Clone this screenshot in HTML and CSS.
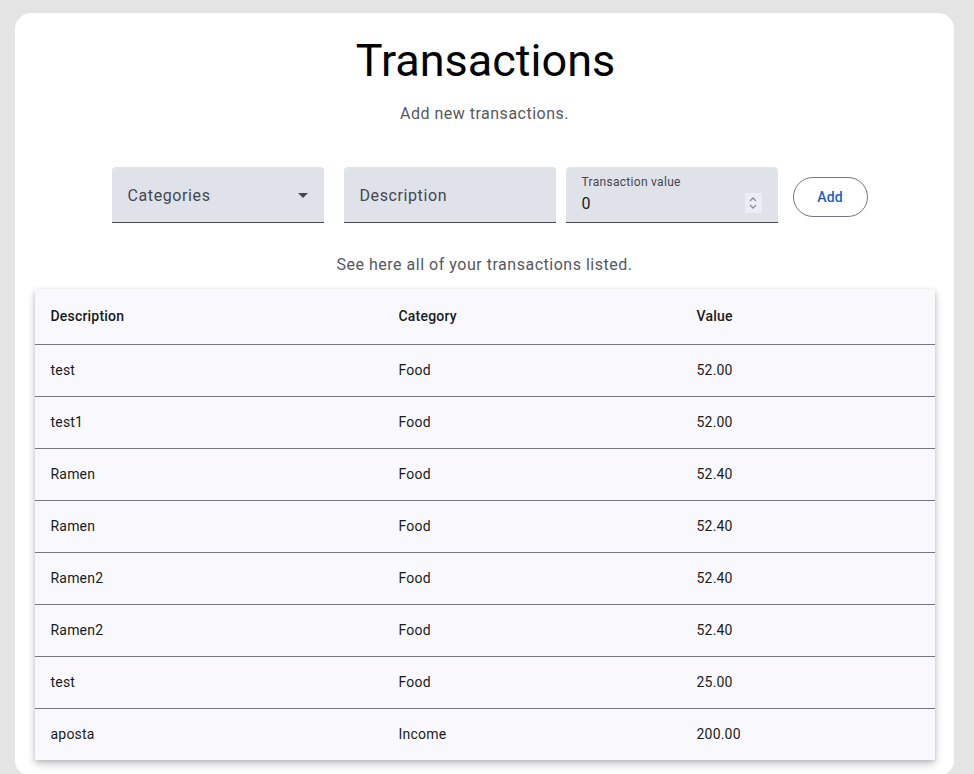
FILE: index.html
```html
<!DOCTYPE html>
<html lang="en">
<head>
<meta charset="utf-8">
<title>Transactions</title>
<link rel="stylesheet" href="styles.css">
</head>
<body>
<main class="card">
  <h1 class="title">Transactions</h1>
  <p class="subtitle">Add new transactions.</p>
  <form class="form-row">
    <div class="field field-select">
      <span class="field-text">Categories</span>
      <svg class="caret" width="10" height="5" viewBox="0 0 10 5"><path d="M0 0h10L5 5z" fill="#44474e"/></svg>
    </div>
    <div class="field field-desc">
      <span class="field-text">Description</span>
    </div>
    <div class="field field-value">
      <div class="value-stack">
        <span class="field-label">Transaction value</span>
        <span class="field-input">0</span>
      </div>
      <span class="spinner">
        <svg width="10" height="16" viewBox="0 0 10 16"><path d="M2 6l3-3 3 3M2 10l3 3 3-3" fill="none" stroke="#8a8c93" stroke-width="1.3"/></svg>
      </span>
    </div>
    <button type="button" class="btn-add">Add</button>
  </form>
  <p class="caption">See here all of your transactions listed.</p>
  <table class="tx-table">
    <thead>
      <tr><th class="c1">Description</th><th class="c2">Category</th><th class="c3">Value</th></tr>
    </thead>
    <tbody>
      <tr><td>test</td><td>Food</td><td>52.00</td></tr>
      <tr><td>test1</td><td>Food</td><td>52.00</td></tr>
      <tr><td>Ramen</td><td>Food</td><td>52.40</td></tr>
      <tr><td>Ramen</td><td>Food</td><td>52.40</td></tr>
      <tr><td>Ramen2</td><td>Food</td><td>52.40</td></tr>
      <tr><td>Ramen2</td><td>Food</td><td>52.40</td></tr>
      <tr><td>test</td><td>Food</td><td>25.00</td></tr>
      <tr><td>aposta</td><td>Income</td><td>200.00</td></tr>
    </tbody>
  </table>
</main>
</body>
</html>
```

FILE: styles.css
```css
* { box-sizing: border-box; }
html, body { margin: 0; }
body {
  background: #e4e4e4;
  font-family: Roboto, "Liberation Sans", sans-serif;
  padding: 13px 0 0 15px;
  color: #1a1b20;
}
.card {
  width: 939px;
  background: #fff;
  border-radius: 16px;
  padding: 20px 0 16px;
  display: flex;
  flex-direction: column;
  align-items: center;
}
.title {
  margin: 0;
  font-size: 45px;
  line-height: 56px;
  font-weight: 400;
  color: #000;
  padding-left: 2px;
}
.subtitle {
  margin: 13px 0 0;
  font-size: 16px;
  line-height: 24px;
  color: #56585e;
  letter-spacing: 0.5px;
}
.form-row {
  margin: 41px 0 0;
  display: flex;
  align-items: center;
  padding-left: 10px;
}
.field {
  width: 212px;
  height: 56px;
  background: #e0e2ea;
  border-radius: 4px 4px 0 0;
  border-bottom: 1px solid #44474e;
  display: flex;
  align-items: center;
  padding: 2px 16px 0;
}
.field-text {
  font-size: 16px;
  color: #44474e;
  letter-spacing: 0.6px;
  flex: 1;
}
.caret { margin-right: 0; margin-left: 2px; margin-top: -1px; }
.field-desc { margin-left: 20px; }
.field-value {
  margin-left: 10px;
  align-items: stretch;
  padding: 0 16px;
}
.value-stack {
  flex: 1;
  display: flex;
  flex-direction: column;
  padding-top: 7px;
}
.field-label {
  font-size: 12px;
  line-height: 16px;
  color: #44474e;
  letter-spacing: 0.3px;
}
.field-input {
  font-size: 16px;
  line-height: 24px;
  margin-top: 2px;
  color: #1a1b20;
}
.spinner {
  align-self: center;
  margin-top: 17px;
  width: 17px;
  height: 20px;
  background: #eceef3;
  display: flex;
  align-items: center;
  justify-content: center;
}
.btn-add {
  margin-left: 15px;
  margin-top: 4px;
  width: 75px;
  height: 40px;
  border: 1px solid #79747e;
  border-radius: 20px;
  background: #fff;
  color: #1b5fbf;
  font-family: Roboto, "Liberation Sans", sans-serif;
  font-size: 14px;
  font-weight: 500;
  letter-spacing: 0.1px;
  padding: 0;
}
.caption {
  margin: 30px 0 0;
  font-size: 16px;
  line-height: 24px;
  color: #56585e;
  letter-spacing: 0.52px;
}
.tx-table {
  margin-top: 12px;
  width: 900px;
  border-collapse: collapse;
  background: #f9f9fd;
  box-shadow: 0 4px 8px rgba(0,0,0,0.22), 0 1px 4px rgba(0,0,0,0.12);
  font-size: 14px;
  letter-spacing: 0.2px;
}
.tx-table th, .tx-table td {
  text-align: left;
  padding: 0 16px;
}
.tx-table th {
  height: 55px;
  font-weight: 500;
  color: #1a1b20;
}
.tx-table td {
  height: 52px;
  color: #1a1b20;
}
.tx-table thead tr,
.tx-table tbody tr {
  border-bottom: 1px solid #74777f;
}
.tx-table tbody tr:last-child { border-bottom: none; }
.c1 { width: 348px; }
.c2 { width: 298px; }
.c3 { width: 254px; }
```
